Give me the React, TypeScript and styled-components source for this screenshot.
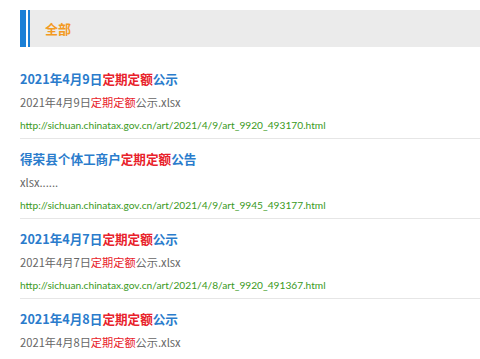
import styled, { createGlobalStyle } from 'styled-components';

const GlobalStyle = createGlobalStyle`
  html, body {
    margin: 0;
    padding: 0;
    background: #fff;
    font-family: "Noto Sans CJK SC", sans-serif;
  }
`;

const Page = styled.div`
  width: 480px;
  height: 359px;
  overflow: hidden;
  padding: 10px 0 0 20px;
  box-sizing: border-box;
`;

const Header = styled.div`
  display: flex;
  height: 37px;
  border-left: 6px solid #1a7fd6;
`;

const HeaderBody = styled.div`
  flex: 1;
  display: flex;
  align-items: center;
  margin-left: 2px;
  border-left: 2px solid #1a7fd6;
  background: #ebebeb;
  padding-left: 15px;
  h3 {
    margin: 0;
    font-size: 13px;
    font-weight: 700;
    color: #f39a22;
  }
`;

const List = styled.ul`
  list-style: none;
  margin: 12px 0 0;
  padding: 0;
`;

const Item = styled.li`
  padding: 10px 0 4px;
  border-bottom: 1px solid #e6e6e6;
`;

const Title = styled.a`
  display: block;
  font-size: 12.6px;
  line-height: 20px;
  font-weight: 700;
  color: #2a7ccc;
  text-decoration: none;
`;

const Desc = styled.p`
  margin: 3px 0 0;
  font-size: 11.2px;
  line-height: 20px;
  color: #666;
`;

const Url = styled.p`
  margin: 4px 0 0;
  font-family: "Lato", "Noto Sans CJK SC", sans-serif;
  font-size: 10.2px;
  line-height: 18px;
  color: #3a9a22;
`;

const Hit = styled.em`
  font-style: normal;
  color: #e8212a;
`;

interface Result {
  title: [string, string];
  desc: [string, string] | string;
  url: string;
}

const results: Result[] = [
  {
    title: ['2021年4月9日', '公示'],
    desc: ['2021年4月9日', '公示.xlsx'],
    url: 'http://sichuan.chinatax.gov.cn/art/2021/4/9/art_9920_493170.html',
  },
  {
    title: ['得荣县个体工商户', '公告'],
    desc: 'xlsx......',
    url: 'http://sichuan.chinatax.gov.cn/art/2021/4/9/art_9945_493177.html',
  },
  {
    title: ['2021年4月7日', '公示'],
    desc: ['2021年4月7日', '公示.xlsx'],
    url: 'http://sichuan.chinatax.gov.cn/art/2021/4/8/art_9920_491367.html',
  },
  {
    title: ['2021年4月8日', '公示'],
    desc: ['2021年4月8日', '公示.xlsx'],
    url: 'http://sichuan.chinatax.gov.cn/art/2021/4/8/art_9920_491366.html',
  },
];

const KEYWORD = '定期定额';

const App = () => {
  return (
    <>
      <GlobalStyle />
      <Page>
        <Header>
          <HeaderBody>
            <h3>全部</h3>
          </HeaderBody>
        </Header>
        <List>
          {results.map((r) => (
            <Item key={r.url}>
              <Title href="#">
                {r.title[0]}
                <Hit>{KEYWORD}</Hit>
                {r.title[1]}
              </Title>
              <Desc>
                {typeof r.desc === 'string' ? (
                  r.desc
                ) : (
                  <>
                    {r.desc[0]}
                    <Hit>{KEYWORD}</Hit>
                    {r.desc[1]}
                  </>
                )}
              </Desc>
              <Url>{r.url}</Url>
            </Item>
          ))}
        </List>
      </Page>
    </>
  );
};

export default App;
